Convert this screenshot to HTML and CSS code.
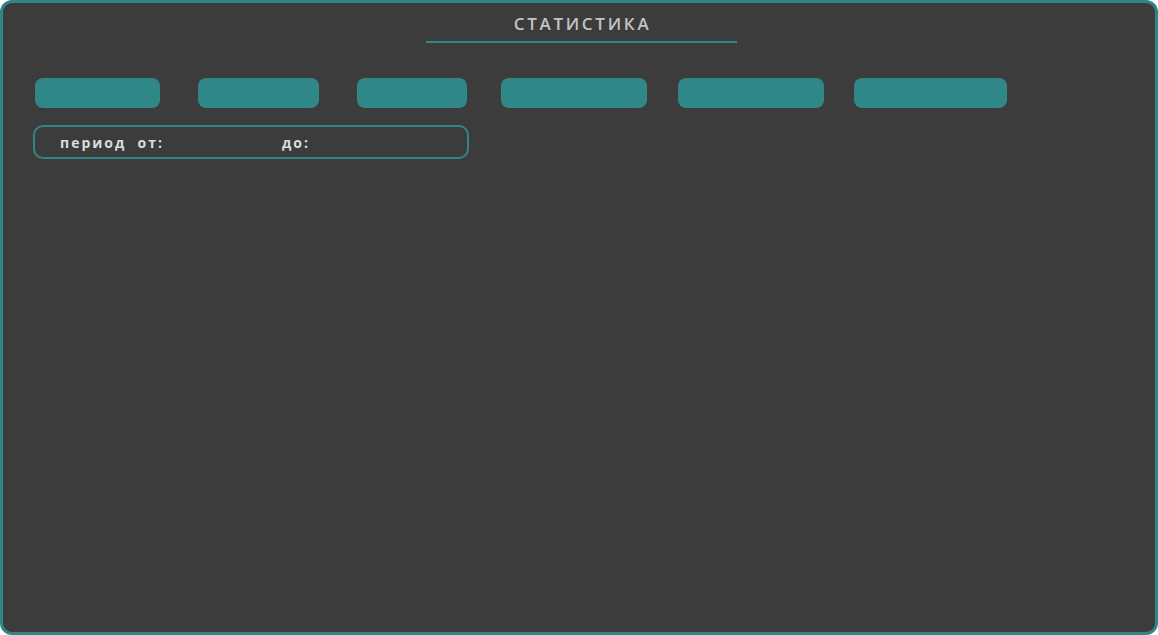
FILE: index.html
```html
<!DOCTYPE html>
<html lang="ru">
<head>
<meta charset="utf-8">
<title>Статистика</title>
<link rel="stylesheet" href="styles.css">
</head>
<body>
<div class="frame">
  <header class="head">
    <h1 class="title">СТАТИСТИКА</h1>
    <div class="underline"></div>
  </header>
  <nav class="tabs">
    <button class="tab w1"></button>
    <button class="tab w2"></button>
    <button class="tab w3"></button>
    <button class="tab w4"></button>
    <button class="tab w5"></button>
    <button class="tab w6"></button>
  </nav>
  <div class="period">
    <span class="lbl">период&nbsp; от:</span>
    <span class="lbl to">до:</span>
  </div>
</div>
</body>
</html>
```
FILE: styles.css
```css
html, body {
  margin: 0;
  padding: 0;
  background: #ffffff;
}
.frame {
  box-sizing: border-box;
  width: 1158px;
  height: 635px;
  border: 3px solid #2e8784;
  border-radius: 12px;
  background: #3c3c3c;
  font-family: "Open Sans", "Liberation Sans", sans-serif;
}
.head {
  display: flex;
  flex-direction: column;
  align-items: center;
  padding-top: 11px;
}
.title {
  margin: 0 0 0 7px;
  font-size: 17px;
  line-height: 20px;
  font-weight: 600;
  letter-spacing: 2.7px;
  color: #c4c4c4;
}
.underline {
  width: 311px;
  height: 2px;
  margin-top: 7px;
  margin-left: 5px;
  background: #2e8784;
}
.tabs {
  display: flex;
  padding-left: 32px;
  margin-top: 35px;
}
.tab {
  height: 30px;
  border: 0;
  padding: 0;
  border-radius: 8px;
  background: #2f8887;
}
.w1 { width: 125px; }
.w2 { width: 121px; margin-left: 38px; }
.w3 { width: 110px; margin-left: 38px; }
.w4 { width: 146px; margin-left: 34px; }
.w5 { width: 146px; margin-left: 31px; }
.w6 { width: 153px; margin-left: 30px; }
.period {
  box-sizing: border-box;
  width: 436px;
  height: 34px;
  margin: 17px 0 0 30px;
  border: 2px solid #2f8887;
  border-radius: 10px;
  display: flex;
  align-items: center;
  padding-left: 25px;
}
.lbl {
  font-size: 14px;
  font-weight: 700;
  letter-spacing: 2px;
  color: #dcdcdc;
}
.to {
  margin-left: 118px;
}
```
